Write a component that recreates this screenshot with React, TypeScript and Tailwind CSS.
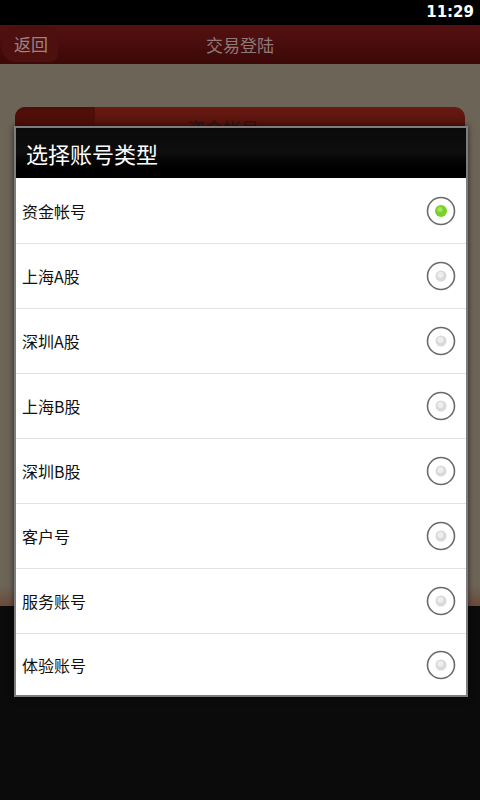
const FONT = { fontFamily: '"Noto Sans CJK SC", "Liberation Sans", sans-serif' };

const options = ["资金帐号", "上海A股", "深圳A股", "上海B股", "深圳B股", "客户号", "服务账号", "体验账号"];

function Radio({ checked }: { checked: boolean }) {
  return (
    <svg viewBox="0 0 30 30" className="h-[30px] w-[30px]" aria-hidden>
      <circle cx="15" cy="15" r="13.5" fill="#fff" stroke="#6a6a6a" strokeWidth="1.6" />
      {checked ? (
        <>
          <circle cx="15" cy="15" r="6" fill="#7cd02c" />
          <circle cx="14" cy="13.5" r="2.5" fill="#a6e65c" />
        </>
      ) : (
        <>
          <circle cx="15" cy="15" r="5.5" fill="#d9d9d9" />
          <circle cx="14.5" cy="14" r="3" fill="#eeeeee" />
        </>
      )}
    </svg>
  );
}

export default function App() {
  return (
    <div className="relative flex h-[800px] w-[480px] flex-col overflow-hidden bg-[#0b0b0b]" style={FONT}>
      {/* status bar */}
      <div className="flex h-[25px] items-center justify-end bg-black pr-[6px] text-[15px] font-bold text-white" style={{ fontFamily: '"DejaVu Sans", sans-serif' }}>
        11:29
      </div>

      {/* title bar (dimmed) */}
      <div className="relative flex h-[39px] items-center justify-center bg-gradient-to-b from-[#561111] to-[#3c0808]">
        <div className="absolute left-[2px] top-[1px] flex h-[36px] w-[56px] items-center rounded-r-[8px] rounded-l-[14px] bg-[#4e0f0f] pl-[12px] text-[17px] text-[#9a8585]">
          返回
        </div>
        <span className="text-[17px] text-[#8e7a7a]">交易登陆</span>
      </div>

      {/* page content (dimmed) */}
      <div className="relative h-[542px] bg-[#6c6457]">
        <div className="absolute left-[15px] right-[15px] top-[43px] h-[40px] rounded-t-[10px] bg-gradient-to-b from-[#6a1a12] to-[#3c0a06]">
          <div className="absolute left-0 top-0 h-full w-[80px] rounded-tl-[10px] bg-[#4e0f0a]" />
          <span className="absolute left-[172px] top-[8px] text-[18px] text-[#2a1212]">资金帐号</span>
        </div>
        <div className="absolute bottom-0 left-0 right-0 h-[20px] bg-gradient-to-b from-[#6c6457] to-[#6a4a3a]" />
      </div>

      {/* dialog */}
      <div className="absolute left-[14px] top-[126px] w-[454px] border-2 border-[#7d7d7d] bg-white shadow-[0_0_6px_rgba(0,0,0,0.6)]">
        <div className="flex h-[50px] items-center bg-gradient-to-b from-[#0a0a0a] via-[#0e0e0e] to-[#000] pl-[10px] text-[22px] text-white">
          选择账号类型
        </div>
        <ul>
          {options.map((o, i) => (
            <li
              key={o}
              className={`flex items-center justify-between pl-[6px] pr-[10px] text-[16px] text-[#111] ${i > 0 ? "border-t border-[#e2e2e2]" : ""} ${i === options.length - 1 ? "h-[62px]" : "h-[65px]"}`}
            >
              <span>{o}</span>
              <Radio checked={i === 0} />
            </li>
          ))}
        </ul>
      </div>
    </div>
  );
}
